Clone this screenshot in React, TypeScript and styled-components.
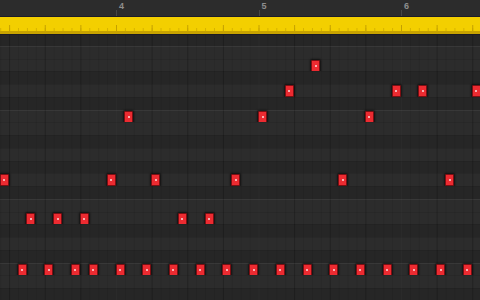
import React from 'react';
import styled, { createGlobalStyle } from 'styled-components';

const BAR = 142.5;
const STEP = BAR / 16;
const ORIGIN = 116; // x of bar 4
const ROW = 12.75;

const GlobalStyle = createGlobalStyle`
  html, body {
    margin: 0;
    padding: 0;
    background: #282828;
    overflow: hidden;
  }
  body {
    font-family: 'Liberation Sans', Arial, sans-serif;
  }
`;

// top-down pitch rows, starting with the partly hidden F#
const pitches = ['F#', 'F', 'E', 'D#', 'D', 'C#', 'C', 'B', 'A#', 'A', 'G#', 'G', 'F#', 'F', 'E', 'D#', 'D', 'C#', 'C', 'B', 'A#'];

const notes: Record<number, number[]> = {
  2: [22],
  4: [19, 31, 34, 40],
  6: [1, 16, 28],
  11: [-13, -1, 4, 13, 25, 37],
  14: [-10, -7, -4, 7, 10],
  18: [-11, -8, -5, -3, 0, 3, 6, 9, 12, 15, 18, 21, 24, 27, 30, 33, 36, 39],
};

export default function App() {
  return (
    <>
      <GlobalStyle />
      <Editor>
        <Header>
          <Ruler>
            {[4, 5, 6].map((n) => (
              <BarCell key={n}>
                <span>{n}</span>
              </BarCell>
            ))}
          </Ruler>
          <RegionStrip />
        </Header>

        <Grid>
          {pitches.map((p, i) => (
            <Row key={i} $black={p.includes('#')} $split={p === 'F' || p === 'C'}>
              {(notes[i] || []).map((s) => (
                <Note key={s} style={{ left: ORIGIN + s * STEP - 0.5 }} />
              ))}
            </Row>
          ))}
        </Grid>
      </Editor>
    </>
  );
}

const Editor = styled.div`
  width: 480px;
  height: 300px;
  overflow: hidden;
  display: flex;
  flex-direction: column;
  background: #282828;
`;

const Header = styled.header`
  position: relative;
  z-index: 1;
  flex: none;
  display: flex;
  flex-direction: column;
`;

const Ruler = styled.div`
  height: 16px;
  display: flex;
  padding-left: ${ORIGIN}px;
  background: #2c2c2c;
`;

const BarCell = styled.div`
  flex: none;
  width: ${BAR}px;
  height: 16px;
  box-sizing: border-box;
  padding: 1px 0 0 3px;
  background: linear-gradient(rgba(255, 255, 255, 0.12), rgba(255, 255, 255, 0.12)) 0 10px / 1px 6px no-repeat;

  span {
    display: block;
    font-size: 9px;
    line-height: 10px;
    font-weight: bold;
    color: #8e8e8e;
  }
`;

const RegionStrip = styled.div`
  height: 17px;
  border-top: 1px solid #1c1c28;
  border-bottom: 1px solid #1c1c22;
  background-color: #f3cf00;
  background-image:
    linear-gradient(#c8a300, #c8a300),
    linear-gradient(90deg, #c4a000 0 1px, transparent 1px),
    linear-gradient(90deg, #d6b200 0 1px, transparent 1px);
  background-size: 100% 3px, ${BAR / 4}px 7px, ${STEP}px 4px;
  background-position: 0 100%, ${ORIGIN}px 8px, ${ORIGIN}px 11px;
  background-repeat: no-repeat, repeat-x, repeat-x;
`;

const Grid = styled.main`
  margin-top: -1.9px;
  display: flex;
  flex-direction: column;
`;

const Row = styled.div<{ $black: boolean; $split: boolean }>`
  position: relative;
  flex: none;
  height: ${ROW}px;
  box-sizing: border-box;
  border-top: 1px solid ${(p) => (p.$split ? 'rgba(255,255,255,0.06)' : 'rgba(0,0,0,0.08)')};
  background-color: ${(p) => (p.$black ? '#262626' : '#2c2c2c')};
  background-image:
    linear-gradient(90deg, rgba(255, 255, 255, 0.06) 0 1px, transparent 1px),
    linear-gradient(90deg, rgba(0, 0, 0, 0.16) 0 1px, transparent 1px),
    linear-gradient(90deg, rgba(0, 0, 0, 0.08) 0 1px, transparent 1px);
  background-size: ${BAR}px 100%, ${BAR / 4}px 100%, ${STEP}px 100%;
  background-position: ${ORIGIN}px 0, ${ORIGIN}px 0, ${ORIGIN}px 0;
`;

const Note = styled.div`
  position: absolute;
  top: 0;
  width: 9px;
  height: 12px;
  border-radius: 1px;
  background: #ec2b31;
  border: 1px solid #7e0e12;
  box-sizing: border-box;
  box-shadow: 0 0 2px 1px rgba(0, 0, 0, 0.6);

  &::after {
    content: '';
    position: absolute;
    left: 2.5px;
    top: 4px;
    width: 2px;
    height: 2px;
    background: #f8b0b2;
  }
`;
